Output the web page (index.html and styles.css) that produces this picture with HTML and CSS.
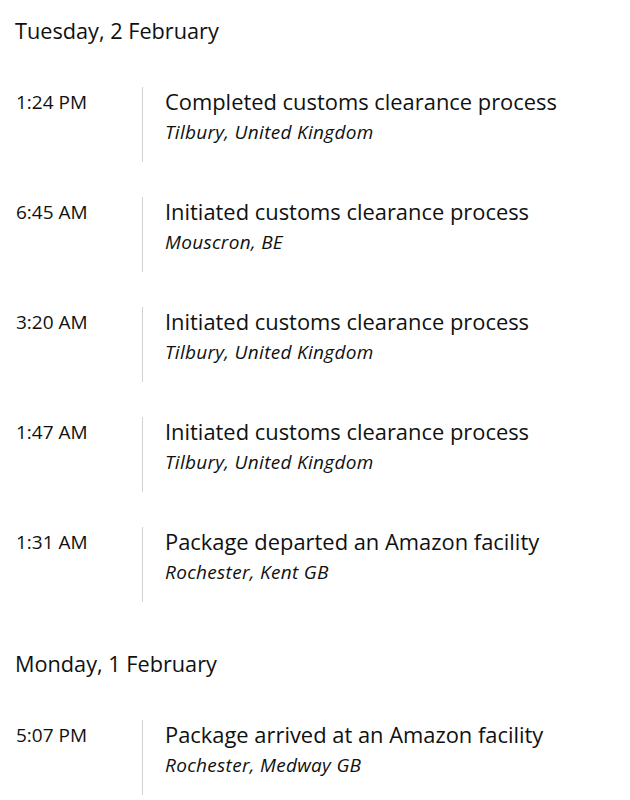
FILE: index.html
```html
<!DOCTYPE html>
<html lang="en">
<head>
<meta charset="utf-8">
<title>Tracking</title>
<link rel="stylesheet" href="styles.css">
</head>
<body>
<main class="tracking">
  <section class="day">
    <h2 class="day-title">Tuesday, 2 February</h2>
    <div class="event">
      <div class="time">1:24 PM</div>
      <div class="detail">
        <div class="status">Completed customs clearance process</div>
        <div class="place">Tilbury, United Kingdom</div>
      </div>
    </div>
    <div class="event">
      <div class="time">6:45 AM</div>
      <div class="detail">
        <div class="status">Initiated customs clearance process</div>
        <div class="place">Mouscron, BE</div>
      </div>
    </div>
    <div class="event">
      <div class="time">3:20 AM</div>
      <div class="detail">
        <div class="status">Initiated customs clearance process</div>
        <div class="place">Tilbury, United Kingdom</div>
      </div>
    </div>
    <div class="event">
      <div class="time">1:47 AM</div>
      <div class="detail">
        <div class="status">Initiated customs clearance process</div>
        <div class="place">Tilbury, United Kingdom</div>
      </div>
    </div>
    <div class="event">
      <div class="time">1:31 AM</div>
      <div class="detail">
        <div class="status">Package departed an Amazon facility</div>
        <div class="place">Rochester, Kent GB</div>
      </div>
    </div>
  </section>
  <section class="day">
    <h2 class="day-title">Monday, 1 February</h2>
    <div class="event">
      <div class="time">5:07 PM</div>
      <div class="detail">
        <div class="status">Package arrived at an Amazon facility</div>
        <div class="place">Rochester, Medway GB</div>
      </div>
    </div>
  </section>
</main>
</body>
</html>
```
FILE: styles.css
```css
* { box-sizing: border-box; }
html, body { margin: 0; background: #fff; }
body {
  font-family: "Open Sans", "Noto Sans", sans-serif;
  color: #0f1111;
}
.tracking {
  padding: 16px 15px 0 15px;
}
.day {
  display: flex;
  flex-direction: column;
  gap: 35px;
}
.day + .day {
  margin-top: 47px;
}
.day-title {
  margin: 0 0 6px 0;
  font-size: 21.7px;
  line-height: 30px;
  font-weight: 400;
}
.event {
  display: flex;
  align-items: flex-start;
}
.time {
  width: 127px;
  flex: none;
  font-size: 19px;
  line-height: 30px;
  padding-left: 1px;
}
.detail {
  flex: 1;
  min-height: 75px;
  border-left: 1.5px solid #cfd3d3;
  padding: 0 0 15px 22px;
}
.status {
  font-size: 21.9px;
  line-height: 30px;
}
.place {
  font-size: 19px;
  line-height: 30px;
  font-style: italic;
  letter-spacing: 0.3px;
}
```
